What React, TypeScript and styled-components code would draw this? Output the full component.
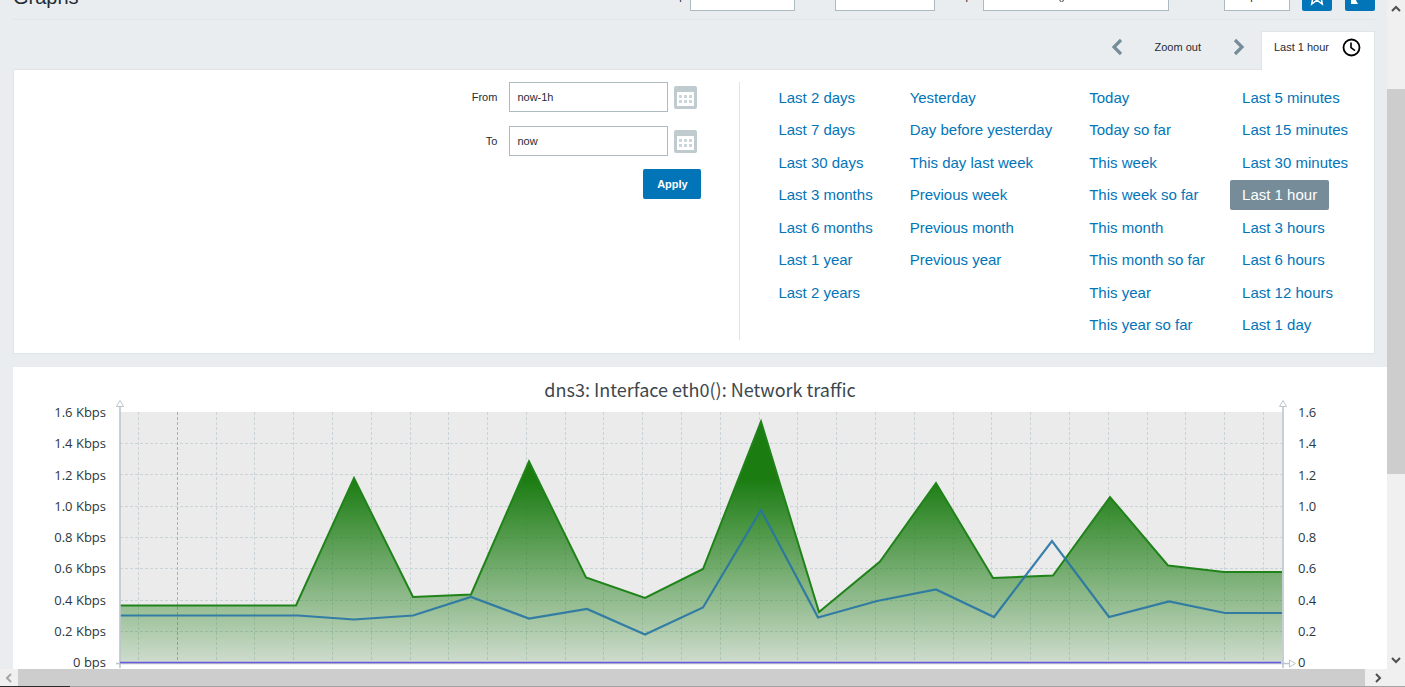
import React from "react";
import styled, { createGlobalStyle } from "styled-components";

const GlobalStyle = createGlobalStyle`
  * { box-sizing: border-box; }
  body {
    margin: 0;
    background: #e9edf0;
    color: #1f2c33;
    font-family: "Liberation Sans", Arial, sans-serif;
    font-size: 11px;
    overflow: hidden;
  }
  button, input, select { font: inherit; color: inherit; }
`;

const Window = styled.div`
  display: grid;
  grid-template-columns: minmax(0, 1fr) 18px;
  grid-template-rows: minmax(0, 1fr) 17px 1px;
  height: 100vh;
`;

const Page = styled.main`
  overflow: hidden;
  padding-left: 13px;
`;

const Header = styled.header`
  display: flex;
  align-items: flex-end;
  justify-content: space-between;
  height: 20px;
  margin-right: 12px;
  padding-bottom: 8px;
  border-bottom: 1px solid #dfe4e7;
  overflow: hidden;
`;

const Title = styled.h1`
  margin: 0;
  font-size: 20px;
  font-weight: 400;
  line-height: 28px;
`;

const Filters = styled.form`
  display: flex;
  align-items: center;
`;

const FilterField = styled.label`
  display: flex;
  align-items: center;
  gap: 5px;
  margin-right: 12px;
`;

const Select = styled.select<{ $width: number }>`
  appearance: none;
  width: ${(p) => p.$width}px;
  height: 30px;
  padding: 0 7px;
  background: #fff;
  border: 1px solid #acbbc2;
  border-radius: 0;
`;

const HeaderButton = styled.button`
  display: block;
  width: 30px;
  height: 30px;
  margin-left: 13px;
  padding: 0;
  background: #0275b8;
  border: 0;
  border-radius: 2px;
  &:first-of-type { margin-left: 0; }
  svg { display: block; }
`;

const TimeBar = styled.nav`
  display: flex;
  justify-content: flex-end;
  align-items: stretch;
  height: 39px;
  margin: 11px 12px -1px 0;
`;

const BarButton = styled.button`
  display: flex;
  align-items: center;
  padding: 0 16px 8px;
  background: none;
  border: 0;
`;

const ActiveTab = styled.button`
  position: relative;
  display: flex;
  align-items: center;
  gap: 12px;
  padding: 0 13px 8px 12px;
  background: #fff;
  border: 1px solid #dfe4e7;
  border-bottom: 0;
`;

const TimePanel = styled.section`
  display: flex;
  margin-right: 12px;
  padding: 12px 14px 13px;
  background: #fff;
  border: 1px solid #dfe4e7;
`;

const RangeForm = styled.form`
  flex: 1;
  display: flex;
  flex-direction: column;
  align-items: flex-end;
  gap: 14px;
  padding-right: 38px;
`;

const RangeRow = styled.div`
  display: flex;
  align-items: center;
  padding-right: 4px;
`;

const RangeLabel = styled.label`
  margin-right: 12px;
`;

const RangeInput = styled.input`
  width: 159px;
  height: 30px;
  padding: 0 7px;
  background: #fff;
  border: 1px solid #acbbc2;
`;

const CalendarButton = styled.button`
  margin-left: 6px;
  padding: 0;
  background: none;
  border: 0;
  svg { display: block; }
`;

const ApplyButton = styled.button`
  width: 58px;
  height: 30px;
  margin-top: -1px;
  padding: 0;
  background: #0275b8;
  border: 0;
  border-radius: 2px;
  color: #fff;
  font-weight: 700;
`;

const Presets = styled.div`
  display: flex;
  gap: 13px;
  padding-left: 26px;
  border-left: 1px solid #dfe4e7;
`;

const PresetColumn = styled.div`
  display: grid;
  grid-template-rows: repeat(8, 30px);
  align-content: space-between;
  justify-items: start;
  height: 258px;
  padding-top: 1px;
`;

const PresetLink = styled.a<{ $active?: boolean }>`
  padding: 0 12px;
  border-radius: 2px;
  font-size: 15px;
  line-height: 30px;
  white-space: nowrap;
  text-decoration: none;
  color: ${(p) => (p.$active ? "#fff" : "#0275b8")};
  background: ${(p) => (p.$active ? "#768d99" : "transparent")};
`;

const ChartPanel = styled.section`
  margin-top: 13px;
  background: #fff;
  overflow: hidden;
  svg { display: block; }
`;

const ChartTitle = styled.text`
  font-family: "Noto Sans CJK JP", "Noto Sans", sans-serif;
  font-size: 18px;
  fill: #3c474d;
`;

const TickLabel = styled.text`
  font-family: "Open Sans", "Noto Sans", sans-serif;
  font-size: 13px;
  fill: #2c373d;
`;

const VerticalScroll = styled.div`
  display: flex;
  flex-direction: column;
  background: #f0f0f0;
`;

const HorizontalScroll = styled.div`
  display: flex;
  background: #f0f0f0;
`;

const ScrollArrow = styled.button`
  flex: 0 0 18px;
  display: flex;
  align-items: center;
  justify-content: center;
  padding: 0;
  background: none;
  border: 0;
`;

const ScrollPart = styled.div<{ $size: number; $thumb?: boolean }>`
  flex: ${(p) => p.$size} 1 0;
  background: ${(p) => (p.$thumb ? "#cdcdcd" : "transparent")};
`;

const ScrollCorner = styled.div`
  background: #f0f0f0;
`;

const BottomEdge = styled.div`
  grid-column: 1 / -1;
  background: linear-gradient(to right, #2b2b2b 70px, #a3a3a3 70px);
`;

const presets: string[][] = [
  ["Last 2 days", "Last 7 days", "Last 30 days", "Last 3 months", "Last 6 months", "Last 1 year", "Last 2 years"],
  ["Yesterday", "Day before yesterday", "This day last week", "Previous week", "Previous month", "Previous year"],
  ["Today", "Today so far", "This week", "This week so far", "This month", "This month so far", "This year", "This year so far"],
  ["Last 5 minutes", "Last 15 minutes", "Last 30 minutes", "Last 1 hour", "Last 3 hours", "Last 6 hours", "Last 12 hours", "Last 1 day"],
];

const incoming = "120,605.5 296,605.5 354,478 413,597 471,594.5 529,461.5 586,577.5 645,598 703,569 761,421.5 819,612 880,561.5 936,483 993,578 1053,575.5 1110,497 1168,565.5 1224,572 1282,572";
const outgoing = "120,615.5 298,615.5 354,619.5 413,615.5 471,597 529,618.5 587,609 645,634.5 703,607.5 761,510 818,617.5 877,601 936,589.5 994,617 1052,541 1109,617 1169,601.5 1225,613 1282,613";

const gridY = [443.5, 474.5, 506.5, 537.5, 568.5, 600.5, 631.5];
const gridX = Array.from({ length: 30 }, (_, i) => Math.floor(138.5 + i * 38.79) + 0.5);

const ticks = ["1.6", "1.4", "1.2", "1.0", "0.8", "0.6", "0.4", "0.2", "0"];

function Chevron({ left }: { left?: boolean }) {
  return (
    <svg width="12" height="18" viewBox="0 0 12 18" fill="none" stroke="#768d99" strokeWidth="3.2">
      <path d={left ? "M11 2 4 9l7 7" : "M2 2l7 7-7 7"} />
    </svg>
  );
}

function Clock() {
  return (
    <svg width="20" height="20" viewBox="0 0 20 20" fill="none" stroke="#000">
      <circle cx="10.5" cy="10.5" r="8" strokeWidth="1.8" />
      <path d="M10 5.500v5.200l4 3" strokeWidth="1.6" />
    </svg>
  );
}

function Calendar() {
  return (
    <svg width="23" height="23" viewBox="0 0 23 23">
      <rect width="23" height="23" rx="2" fill="#c0cbd0" />
      <rect x="3" y="6" width="17" height="14" fill="#fff" />
      {[9, 14].map((y) => [5, 10, 15].map((x) => (
        <rect key={`${x}-${y}`} x={x} y={y} width="3" height="3" fill="#ccd5d9" />
      )))}
    </svg>
  );
}

function ScrollChevron({ d, muted }: { d: string; muted?: boolean }) {
  return (
    <svg width="10" height="10" viewBox="0 0 10 10" fill="none" stroke={muted ? "#a6a6a6" : "#505050"} strokeWidth="2">
      <path d={d} />
    </svg>
  );
}

function TrafficChart() {
  return (
    <svg width="1374" height="302" viewBox="13 367 1374 302" role="img" aria-label="Network traffic">
      <defs>
        <linearGradient id="fade" gradientUnits="userSpaceOnUse" x1="0" y1="478" x2="0" y2="662">
          <stop offset="0" stopColor="#1a7c11" stopOpacity="1" />
          <stop offset="1" stopColor="#1a7c11" stopOpacity="0.14" />
        </linearGradient>
      </defs>
      <rect x="120" y="412" width="1163" height="251" fill="#ebebeb" />
      <g stroke="#cad4d8" strokeDasharray="3 2">
        {gridY.map((y) => <path key={y} d={`M120 ${y}H1282`} />)}
        {gridX.map((x, i) => (
          <path key={x} d={`M${x} 412V662`} stroke={i === 1 ? "#a3b2ba" : undefined} />
        ))}
      </g>
      <polygon points={`120,662 ${incoming} 1282,662`} fill="url(#fade)" />
      <polyline points={incoming} fill="none" stroke="#20831a" strokeWidth="2" />
      <polyline points={outgoing} fill="none" stroke="#2774a4" strokeOpacity="0.9" strokeWidth="2.2" />
      <g fill="none" stroke="#bbc6cc">
        <path d="M120 407V668M1283 407V668" strokeWidth="1.6" />
        <path d="M116 663.5H1289" strokeWidth="1.4" />
        <path d="M116.5 406.500h7l-3.500-6zM1279.500 406.500h7l-3.500-6zM1289.500 660v7l6-3.500z" fill="#fff" />
      </g>
      <path d="M120 662.500H1281" stroke="#6c59dc" strokeWidth="1.600" />
      <ChartTitle x="700" y="397" textAnchor="middle">dns3: Interface eth0(): Network traffic</ChartTitle>
      {ticks.map((t, i) => {
        const y = Math.round(417 + i * 31.25);
        return (
          <React.Fragment key={t}>
            <TickLabel x="106" y={y} textAnchor="end">{t === "0" ? "0 bps" : `${t} Kbps`}</TickLabel>
            <TickLabel x="1298" y={y}>{t}</TickLabel>
          </React.Fragment>
        );
      })}
    </svg>
  );
}

export default function App() {
  return (
    <>
      <GlobalStyle />
      <Window>
        <Page>
          <Header>
            <Title>Graphs</Title>
            <Filters>
              <FilterField>Group<Select $width={105}><option>all</option></Select></FilterField>
              <FilterField>Host<Select $width={100}><option>dns3</option></Select></FilterField>
              <FilterField>Graph<Select $width={186}><option>Interface eth0(): Network traffic</option></Select></FilterField>
              <FilterField>View as<Select $width={66}><option>Graph</option></Select></FilterField>
              <HeaderButton type="button" aria-label="Add to favourites">
                <svg width="30" height="30" viewBox="0 0 30 30" fill="none" stroke="#fff" strokeWidth="1.5">
                  <path d="M15 6l2.500 5.500 6 .5-4.500 4 1.300 7-5.300-3.800L9.700 23l1.300-7-4.500-4 6-.5z" />
                </svg>
              </HeaderButton>
              <HeaderButton type="button" aria-label="Full screen">
                <svg width="30" height="30" viewBox="0 0 30 30" fill="#fff">
                  <path d="M6 15l2.500 2.500 3-3 2 2-2.500 3 2 3.500H6zM24 15l-2.500-2.500-3 3-2-2 3-3L16.500 7H24z" />
                </svg>
              </HeaderButton>
            </Filters>
          </Header>

          <TimeBar>
            <BarButton aria-label="Previous period"><Chevron left /></BarButton>
            <BarButton>Zoom out</BarButton>
            <BarButton aria-label="Next period"><Chevron /></BarButton>
            <ActiveTab>Last 1 hour<Clock /></ActiveTab>
          </TimeBar>

          <TimePanel>
            <RangeForm onSubmit={(e) => e.preventDefault()}>
              <RangeRow>
                <RangeLabel htmlFor="from">From</RangeLabel>
                <RangeInput id="from" defaultValue="now-1h" />
                <CalendarButton type="button" aria-label="Pick start"><Calendar /></CalendarButton>
              </RangeRow>
              <RangeRow>
                <RangeLabel htmlFor="to">To</RangeLabel>
                <RangeInput id="to" defaultValue="now" />
                <CalendarButton type="button" aria-label="Pick end"><Calendar /></CalendarButton>
              </RangeRow>
              <ApplyButton>Apply</ApplyButton>
            </RangeForm>
            <Presets>
              {presets.map((column) => (
                <PresetColumn key={column[0]}>
                  {column.map((name) => (
                    <PresetLink key={name} href="#" $active={name === "Last 1 hour"}>{name}</PresetLink>
                  ))}
                </PresetColumn>
              ))}
            </Presets>
          </TimePanel>

          <ChartPanel><TrafficChart /></ChartPanel>
        </Page>

        <VerticalScroll>
          <ScrollArrow aria-label="Scroll up"><ScrollChevron d="M1 7l4-4 4 4" /></ScrollArrow>
          <ScrollPart $size={71} />
          <ScrollPart $size={385} $thumb />
          <ScrollPart $size={177} />
          <ScrollArrow aria-label="Scroll down"><ScrollChevron d="M1 3l4 4 4-4" /></ScrollArrow>
        </VerticalScroll>

        <HorizontalScroll>
          <ScrollArrow aria-label="Scroll left"><ScrollChevron d="M7 1L3 5l4 4" muted /></ScrollArrow>
          <ScrollPart $size={1347} $thumb />
          <ScrollPart $size={4} />
          <ScrollArrow aria-label="Scroll right"><ScrollChevron d="M3 1l4 4-4 4" /></ScrollArrow>
        </HorizontalScroll>
        <ScrollCorner />
        <BottomEdge />
      </Window>
    </>
  );
}
